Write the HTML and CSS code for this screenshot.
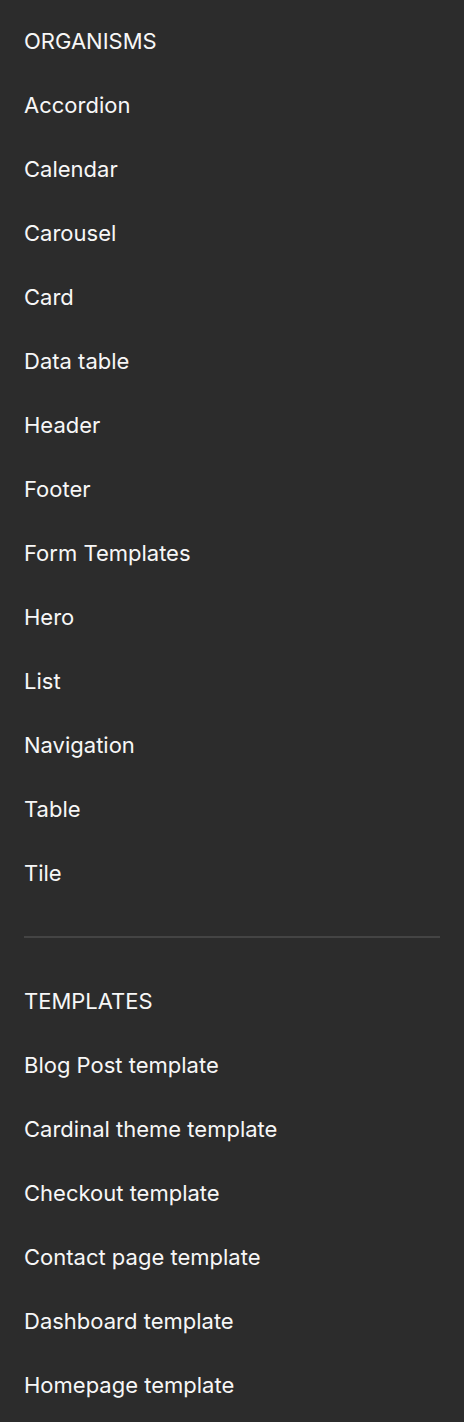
FILE: index.html
```html
<!DOCTYPE html>
<html lang="en">
<head>
<meta charset="utf-8">
<title>Sidebar</title>
<link rel="stylesheet" href="styles.css">
</head>
<body>
<nav class="sidebar">
  <section class="group">
    <h2 class="group-title">ORGANISMS</h2>
    <ul class="group-list">
      <li class="item">Accordion</li>
      <li class="item">Calendar</li>
      <li class="item">Carousel</li>
      <li class="item">Card</li>
      <li class="item">Data table</li>
      <li class="item">Header</li>
      <li class="item">Footer</li>
      <li class="item">Form Templates</li>
      <li class="item">Hero</li>
      <li class="item">List</li>
      <li class="item">Navigation</li>
      <li class="item">Table</li>
      <li class="item">Tile</li>
    </ul>
  </section>
  <hr class="divider">
  <section class="group">
    <h2 class="group-title">TEMPLATES</h2>
    <ul class="group-list">
      <li class="item">Blog Post template</li>
      <li class="item">Cardinal theme template</li>
      <li class="item">Checkout template</li>
      <li class="item">Contact page template</li>
      <li class="item">Dashboard template</li>
      <li class="item">Homepage template</li>
    </ul>
  </section>
</nav>
</body>
</html>
```
FILE: styles.css
```css
html, body {
  margin: 0;
  padding: 0;
  background: #2c2c2c;
}
body {
  font-family: Inter, "Noto Sans", sans-serif;
  color: #f7f7f7;
}
.sidebar {
  padding: 9px 24px 0;
}
.group-title,
.item {
  margin: 0;
  font-size: 22px;
  font-weight: 400;
  height: 64px;
  line-height: 64px;
  white-space: nowrap;
}
.group-list {
  list-style: none;
  margin: 0;
  padding: 0;
}
.divider {
  border: 0;
  height: 2px;
  background: #444444;
  margin: 31px 0;
}
```
